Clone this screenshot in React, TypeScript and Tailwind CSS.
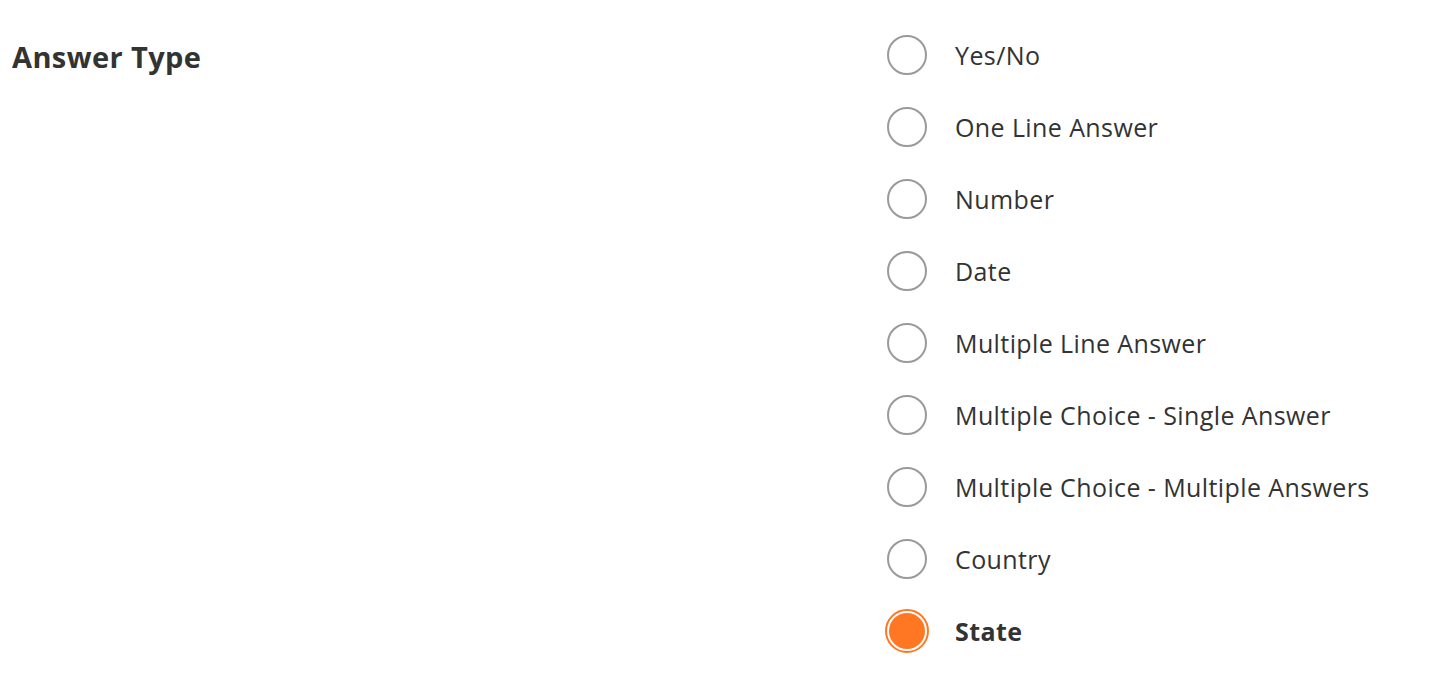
import React from "react";

const options = [
  "Yes/No",
  "One Line Answer",
  "Number",
  "Date",
  "Multiple Line Answer",
  "Multiple Choice - Single Answer",
  "Multiple Choice - Multiple Answers",
  "Country",
  "State",
];

export default function App() {
  const selected = "State";
  return (
    <div
      className="w-[1440px] h-[676px] bg-white flex text-[#333333]"
      style={{ fontFamily: '"Open Sans", "Liberation Sans", sans-serif' }}
    >
      <div className="w-[885px] pl-3 pt-[38px]">
        <h2 className="text-[29px] leading-[38px] font-bold tracking-[0.4px]">Answer Type</h2>
      </div>
      <div className="flex flex-col pt-[19px]">
        {options.map((o) => {
          const sel = o === selected;
          return (
            <label key={o} className="h-[72px] flex items-center cursor-pointer">
              <span className="w-[44px] h-[44px] flex items-center justify-center">
                {sel ? (
                  <span className="w-[44px] h-[44px] rounded-full border-2 border-[#ff7722] bg-white flex items-center justify-center">
                    <span className="w-[36px] h-[36px] rounded-full bg-[#ff7722]" />
                  </span>
                ) : (
                  <span className="w-[40px] h-[40px] rounded-full border-2 border-[#9a9a9a] bg-white" />
                )}
              </span>
              <span
                className={`ml-[26px] text-[25px] leading-[32px] tracking-[0.4px] ${sel ? "font-bold" : "font-normal"}`}
              >
                {o}
              </span>
            </label>
          );
        })}
      </div>
    </div>
  );
}
